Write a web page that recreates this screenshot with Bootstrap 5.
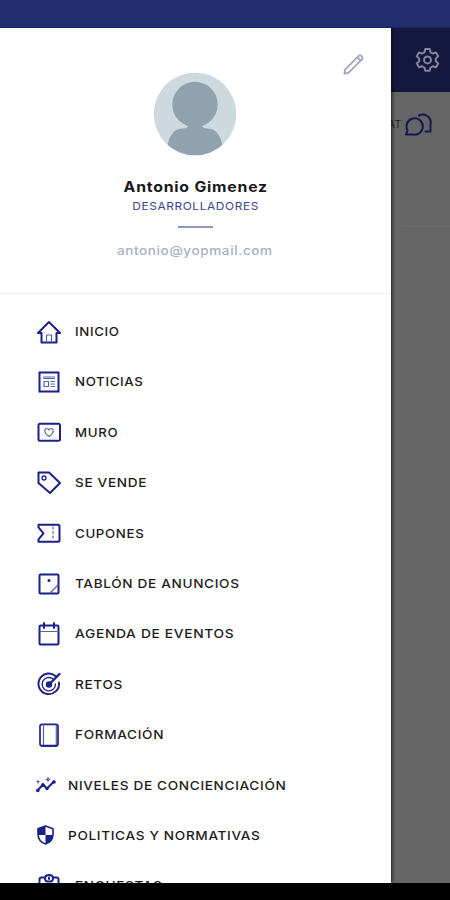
<!DOCTYPE html>
<html lang="es">
<head>
<meta charset="utf-8">
<meta name="viewport" content="width=device-width, initial-scale=1">
<title>Menú</title>
<link href="https://cdn.jsdelivr.net/npm/bootstrap@5.3.0/dist/css/bootstrap.min.css" rel="stylesheet">
<style>
body{font-family:Inter,"Liberation Sans",sans-serif;background:#000;height:900px;color:#1c1c20}
.phone{width:450px;height:900px}
.status{height:27.5px;background:#222d6c;border-bottom:1px solid #17206a}
.stage{height:855px}
.drawer{width:390.5px;background:#fff;box-shadow:1px 0 4px rgba(0,0,0,.75);z-index:2}
.profile{height:266px;border-bottom:1px solid #eff0f2;padding-top:44.5px}
.edit{top:25px;right:26px;width:23px;height:23px}
.avatar{width:84px;height:84px}
.person{font-size:14.2px;font-weight:700;line-height:18px;margin-top:22px;letter-spacing:.7px;color:#18181b;transform:scaleX(1.115)}
.team{font-size:10.8px;line-height:14px;margin-top:3.5px;letter-spacing:.55px;color:#3b468f;transform:scaleX(1.1)}
.rule{width:35px;height:2px;background:#8e97c3;margin-top:12px}
.mail{font-size:12.5px;font-weight:500;line-height:16px;margin-top:15.5px;letter-spacing:.55px;color:#a9afc6;transform:scaleX(1.085)}
.menu{padding:12.9px 0 0 36px}
.entry{height:50.4px;font-size:12.2px;font-weight:500;letter-spacing:.6px;line-height:16px}
.entry span{transform:scaleX(1.115);transform-origin:left;padding-top:1px}
.entry.narrow span{transform:scaleX(1.088)}
.entry.wide span{transform:scaleX(1.13)}
.entry svg,.edit,.gear,.chat{fill:none;stroke:#1b218a;stroke-width:2;stroke-linejoin:round;stroke-linecap:round}
.entry svg{width:26px;height:26px;margin-right:13px}
.entry.tight svg{width:20px;height:20px;margin-right:12px}
.entry .solid{fill:#1b218a;stroke:none}
.entry .thin{stroke-width:1.2;stroke:#5b62a5}
.behind{width:59.5px;background:#666}
.topbar{height:64px;background:#14183f;padding-right:9px}
.gear{width:27px;height:27px;stroke:#85869a}
.tabs{height:66px;gap:2px;padding-right:17px;font-size:10px;letter-spacing:.8px;color:#222}
.chat{width:29px;height:25px;stroke:#16194f}
.strip{height:69px;border-bottom:1px solid #6d6d6d;margin-left:11px}
</style>
<script src="https://cdn.jsdelivr.net/npm/bootstrap@5.3.0/dist/js/bootstrap.bundle.min.js"></script>
</head>
<body class="m-0 overflow-hidden">
<div class="phone d-flex flex-column overflow-hidden">
<header class="status flex-shrink-0"></header>
<div class="stage d-flex flex-shrink-0 overflow-hidden">
<aside class="drawer position-relative flex-shrink-0">
<section class="profile d-flex flex-column align-items-center">
<svg class="edit position-absolute" viewBox="0 0 24 24" style="stroke:#a2a8c4"><path d="M2.500 21.500l.7-4.200L17.500 3q1.300-1.200 2.600 0l.8.8q1.200 1.300 0 2.600L6.700 20.700zM16 4.600l3.400 3.400"/></svg>
<svg class="avatar flex-shrink-0" viewBox="0 0 84 84"><defs><clipPath id="disc"><circle cx="42" cy="42" r="41.300"/></clipPath></defs><g clip-path="url(#disc)"><path fill="#cdd9df" d="M0 0h84v84H0z"/><circle cx="42" cy="32.500" r="22.700" fill="#91a2af"/><path fill="#91a2af" d="M35 50h14c-1 5 1 6.500 6 6.500 9 0 13.500 9 15 20V90H14V76.500c1.500-11 6-20 15-20 5 0 7-1.500 6-6.500z"/></g></svg>
<div class="person">Antonio Gimenez</div>
<div class="team">DESARROLLADORES</div>
<div class="rule"></div>
<div class="mail">antonio@yopmail.com</div>
</section>
<nav class="menu">
<div class="entry narrow d-flex align-items-center"><svg viewBox="0 0 26 26"><path d="M2 14L13 3l11 11h-3.500v9.500h-15V14z"/><path class="thin" d="M10.500 23v-7h5v7"/></svg><span>INICIO</span></div>
<div class="entry narrow d-flex align-items-center"><svg viewBox="0 0 26 26"><path stroke-linejoin="miter" d="M3.500 3.500h19v19h-19z"/><path class="thin" d="M7.500 8h11M7.500 9.500h11M8 12.500h4.500v5H8zM15 12.500h3.500M15 15h3.500M15 17.500h3.500"/></svg><span>NOTICIAS</span></div>
<div class="entry narrow d-flex align-items-center"><svg viewBox="0 0 26 26"><rect x="2.500" y="4.700" width="21.500" height="17" rx="1.500"/><path class="thin" d="M13 17.500c-6-4-4.500-8-2.200-8 1.200 0 2 .8 2.200 1.700.2-.9 1-1.700 2.200-1.700 2.300 0 3.800 4-2.200 8z"/></svg><span>MURO</span></div>
<div class="entry d-flex align-items-center"><svg viewBox="0 0 26 26"><path d="M2.500 2.500h10.500L24 13 14 23 2.500 13z"/><circle cx="8" cy="8" r="2" stroke-width="1.300"/></svg><span>SE VENDE</span></div>
<div class="entry narrow d-flex align-items-center"><svg viewBox="0 0 26 26"><path d="M2.500 4.800H22q1.500 0 1.500 1.500v14q0 1.500-1.500 1.500H2.500v-2.500l5-6-5-6z"/><path class="thin" d="M17 7v13" stroke-dasharray="2 2.500"/></svg><span>CUPONES</span></div>
<div class="entry d-flex align-items-center"><svg viewBox="0 0 26 26"><rect x="3.500" y="3.500" width="19" height="19" rx="1"/><path class="thin" d="M14 22l8-8M16 21.500v-1.500"/><circle class="solid" cx="13" cy="9.500" r="1.500"/></svg><span>TABLÓN DE ANUNCIOS</span></div>
<div class="entry wide d-flex align-items-center"><svg viewBox="0 0 26 26"><rect x="3.500" y="4.500" width="19" height="19" rx="1.200"/><path d="M8 2v5M18 2v5"/><path class="thin" d="M4 10.500h18"/></svg><span>AGENDA DE EVENTOS</span></div>
<div class="entry d-flex align-items-center"><svg viewBox="0 0 26 26"><path stroke-width="1.900" d="M19.500 5A10.300 10.300 0 1 0 23 11.500"/><path stroke-width="1.300" d="M17 8A6.700 6.700 0 1 0 19.500 13"/><circle class="solid" cx="13" cy="13.500" r="3.200"/><path stroke-width="2.300" d="M13 13.500L23.500 3"/></svg><span>RETOS</span></div>
<div class="entry d-flex align-items-center"><svg viewBox="0 0 26 26"><rect x="4" y="2.300" width="18" height="21.500" rx="2" stroke-width="1.700"/><path class="thin" d="M7.500 3v20M20.300 3v20"/><path d="M6 23.800h14"/></svg><span>FORMACIÓN</span></div>
<div class="entry tight d-flex align-items-center"><svg viewBox="0 0 20 20"><path d="M1.500 15.500L7 9.500l4 4 7-7"/><g class="solid"><circle cx="1.800" cy="15.500" r="1.800"/><circle cx="7" cy="9.500" r="1.600"/><circle cx="11" cy="13.500" r="1.700"/><circle cx="18" cy="7" r="1.800"/><path fill-opacity=".7" d="M12 1.500l.9 2.100 2.100.9-2.100.9-.9 2.100-.9-2.100L9 4.500l2.100-.9zM2 4.500l.7 1.600 1.600.7-1.600.7L2 9.100l-.7-1.600-1.300-.7 1.300-.7z"/></g></svg><span>NIVELES DE CONCIENCIACIÓN</span></div>
<div class="entry tight d-flex align-items-center"><svg viewBox="0 0 20 20"><path stroke-width="1.600" d="M9.500 1L17 3.700V9c0 5-3.200 8.500-7.500 10C5.200 17.500 2 14 2 9V3.700z"/><path class="solid" d="M9.500 1v9H2V3.700zM9.500 10H17c-.5 4.500-3.500 7.700-7.500 9z"/></svg><span>POLITICAS Y NORMATIVAS</span></div>
<div class="entry d-flex align-items-center"><svg viewBox="0 0 26 26"><path d="M9 4.500H5.500q-2 0-2 2V24h19V6.500q0-2-2-2H17Q16.500 2 13 2T9 4.500zM9 5q0 3 2 3.500h4q2-.5 2-3.500M13 4.500v1.500"/></svg><span>ENCUESTAS</span></div>
</nav>
</aside>
<main class="behind overflow-hidden">
<div class="topbar d-flex align-items-center justify-content-end"><svg class="gear" viewBox="0 0 27 27"><path d="M11.300 3h4.400l.8 3.200q1.300.5 2.300 1.300l3.200-1 2.200 3.800-2.400 2.300v2.600l2.400 2.300-2.200 3.800-3.200-1q-1 .8-2.300 1.300l-.8 3.200h-4.400l-.8-3.200q-1.300-.5-2.300-1.300l-3.200 1-2.200-3.800 2.400-2.300v-2.600l-2.400-2.300L5 6.500l3.200 1q1-.8 2.300-1.300z"/><circle cx="13.500" cy="13.900" r="3.500"/></svg></div>
<div class="tabs d-flex align-items-center justify-content-end"><span>CHAT</span><svg class="chat flex-shrink-0" viewBox="0 0 29 25"><path d="M2 22.500l1.500-4a8.200 8.200 0 1 1 5.500 4z"/><path d="M15 3.500a8 8 0 0 1 11.500 9v7h-5"/></svg></div>
<div class="strip"></div>
</main>
</div>
</div>
</body>
</html>
